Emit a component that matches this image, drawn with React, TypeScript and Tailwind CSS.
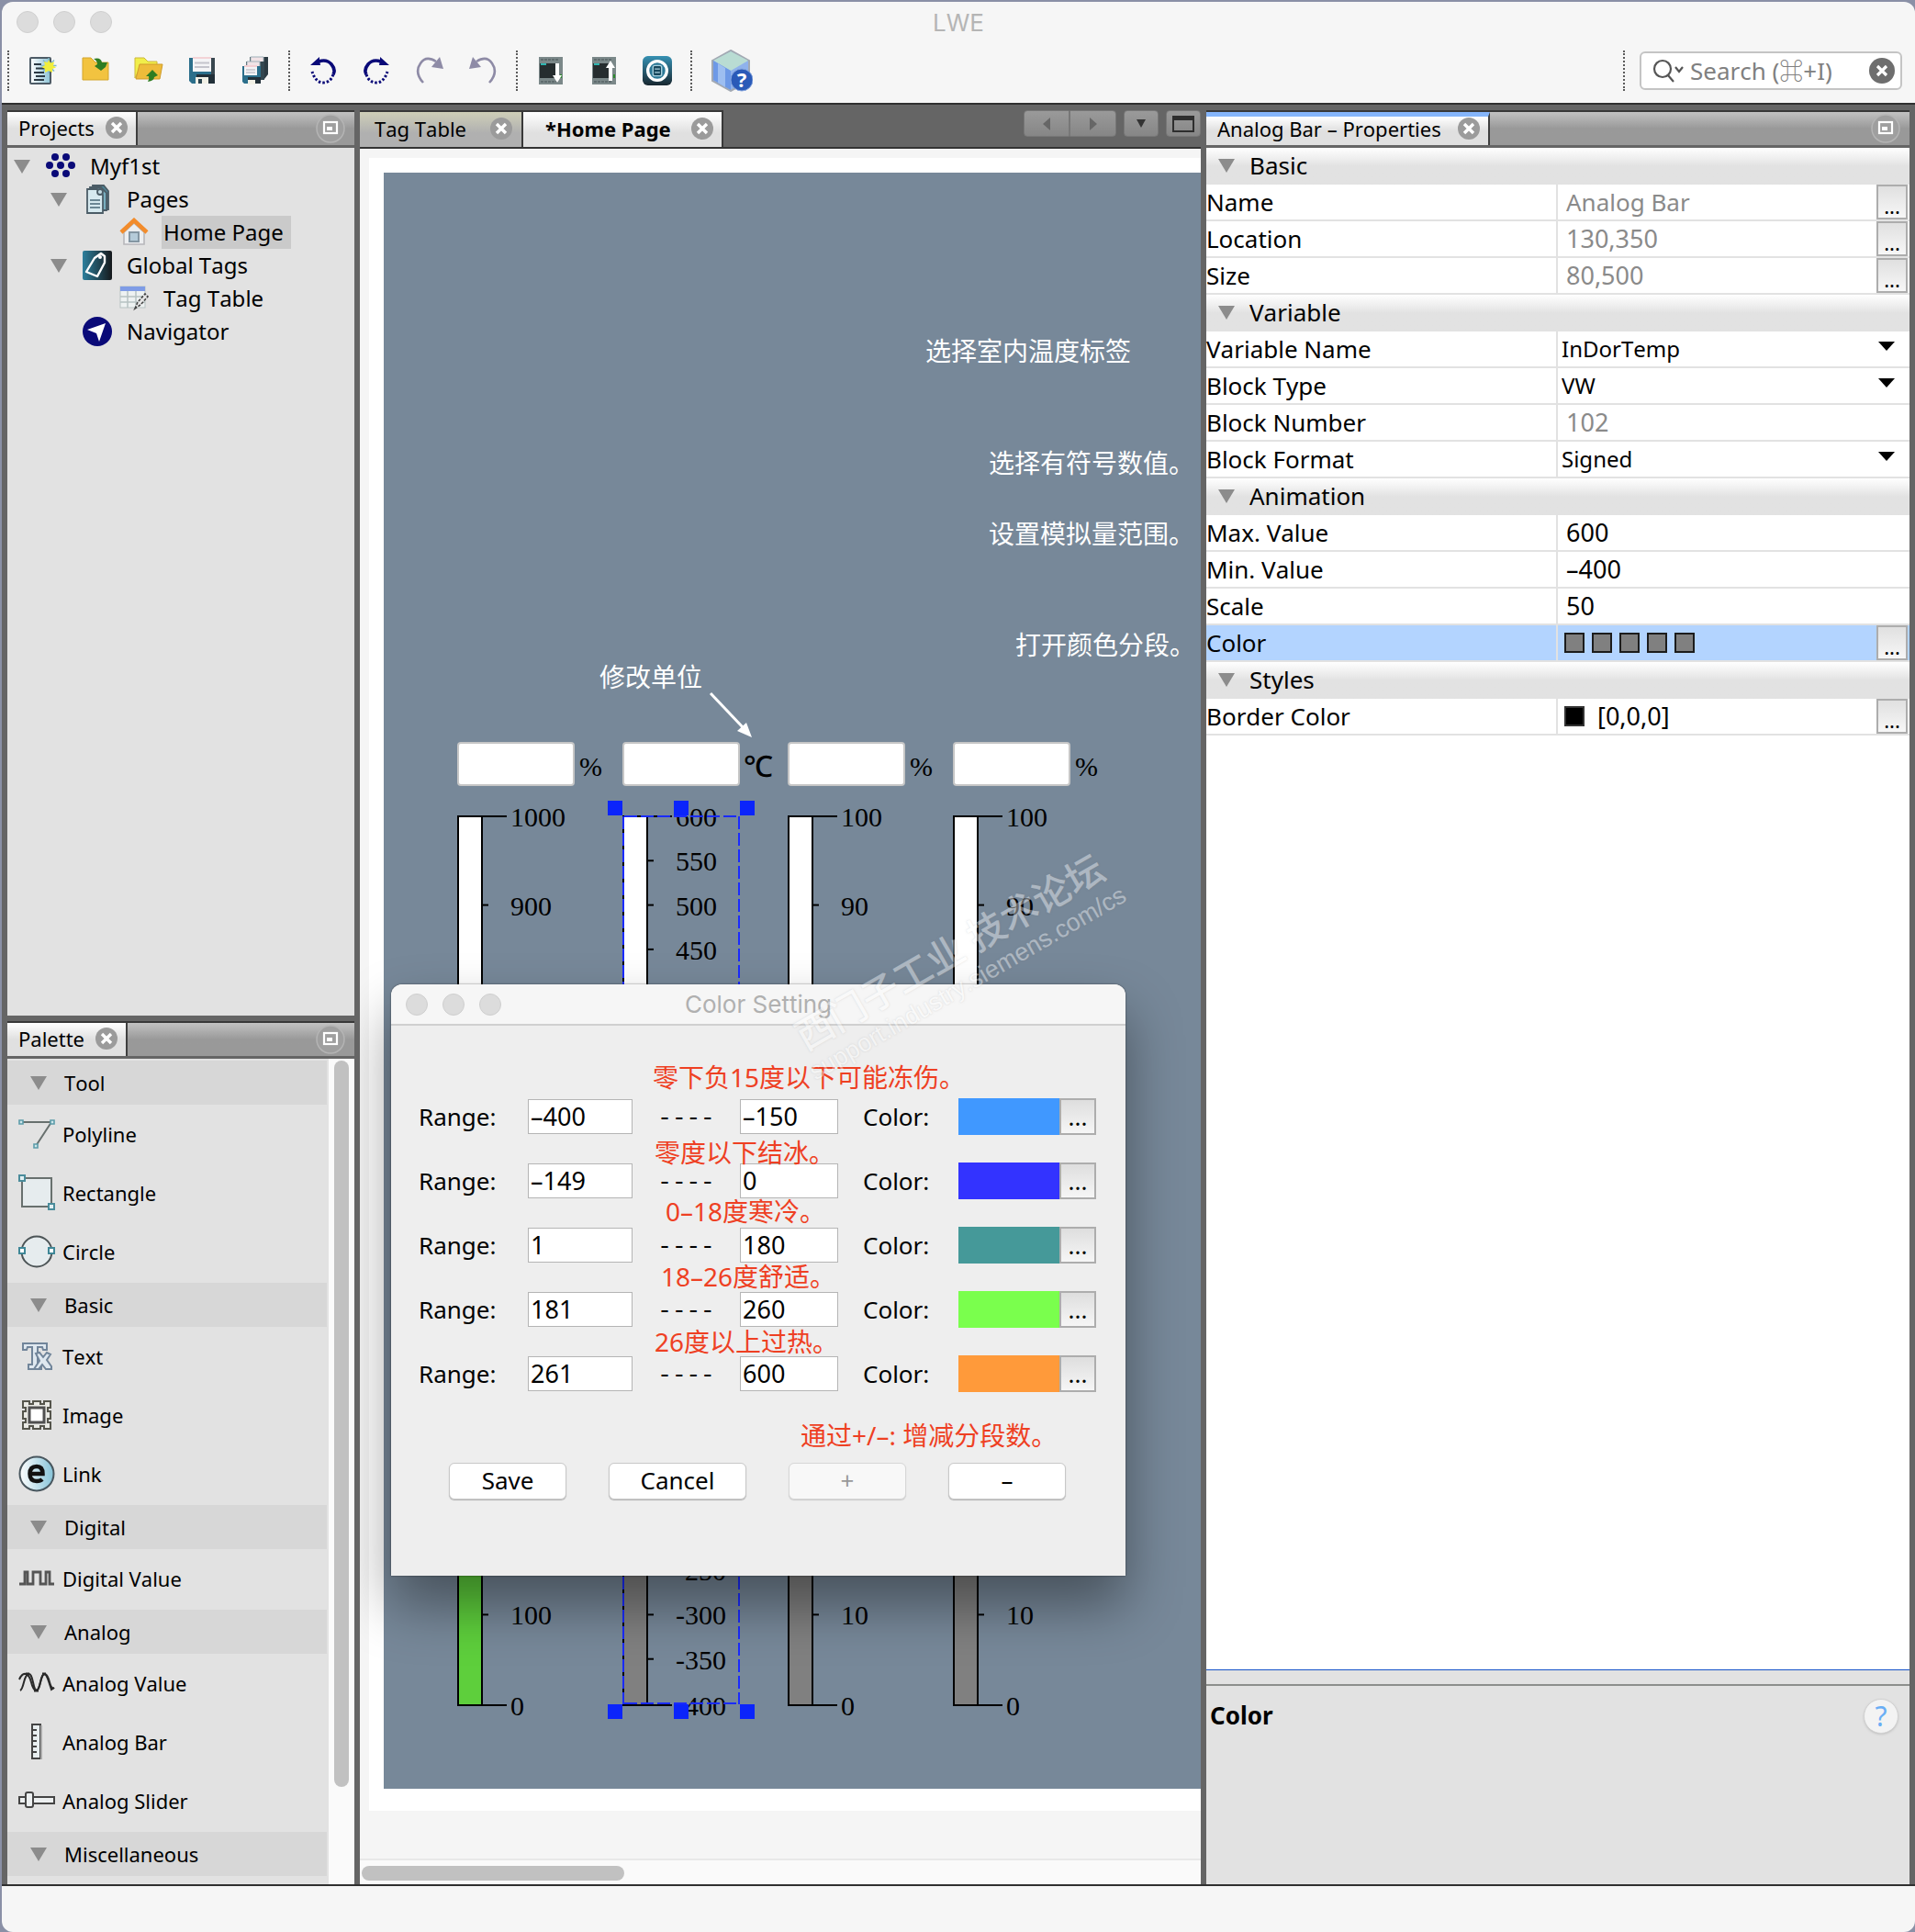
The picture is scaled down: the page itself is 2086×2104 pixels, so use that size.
import type { ReactNode } from "react";
import { useState } from "react";

const CANVAS_NOTES = [
  { text: "选择室内温度标签", pos: "left-[590px] top-[174px]" },
  { text: "选择有符号数值。", pos: "left-[659px] top-[296px]" },
  { text: "设置模拟量范围。", pos: "left-[659px] top-[373px]" },
  { text: "打开颜色分段。", pos: "left-[688px] top-[494px]" },
  { text: "修改单位", pos: "left-[235px] top-[529px]" },
];

const DIALOG_NOTES = [
  { text: "零下负15度以下可能冻伤。", pos: "left-[285px] top-[81px]" },
  { text: "零度以下结冰。", pos: "left-[287px] top-[163px]" },
  { text: "0–18度寒冷。", pos: "left-[299px] top-[227px]" },
  { text: "18–26度舒适。", pos: "left-[294px] top-[298px]" },
  { text: "26度以上过热。", pos: "left-[287px] top-[369px]" },
  { text: "通过+/–: 增减分段数。", pos: "left-[446px] top-[471px]" },
];

interface Range {
  from: string;
  to: string;
  swatch: string;
}

const RANGES: Range[] = [
  { from: "–400", to: "–150", swatch: "bg-[#4098ff]" },
  { from: "–149", to: "0", swatch: "bg-[#3333ff]" },
  { from: "1", to: "180", swatch: "bg-[#459999]" },
  { from: "181", to: "260", swatch: "bg-[#7aff4d]" },
  { from: "261", to: "600", swatch: "bg-[#ff9a3a]" },
];

function Triangle({ className = "" }: { className?: string }) {
  return (
    <svg width="18" height="15" viewBox="0 0 18 15" className={`shrink-0 ${className}`}>
      <path d="M0 0h18L9 15z" fill="#8c8c8c" />
    </svg>
  );
}

function CloseButton({ label }: { label: string }) {
  return (
    <button aria-label={label} className="shrink-0">
      <svg width="24" height="24" viewBox="0 0 24 24">
        <circle cx="12" cy="12" r="12" fill="#9b9b9b" />
        <path d="M7 7l10 10M17 7L7 17" stroke="#fff" strokeWidth="3.4" />
      </svg>
    </button>
  );
}

function FloatButton() {
  return (
    <button aria-label="Minimize panel" className="shrink-0">
      <svg width="32" height="32" viewBox="0 0 32 32">
        <circle cx="16" cy="16" r="15" fill="#9f9f9f" stroke="#b4b4b4" strokeWidth="1.5" />
        <rect x="9" y="9" width="14" height="12" fill="none" stroke="#fff" strokeWidth="2.2" />
        <rect x="12" y="14" width="6" height="4" fill="#fff" />
      </svg>
    </button>
  );
}

interface PanelHeaderProps {
  title: string;
  focused?: boolean;
}

function PanelHeader({ title, focused }: PanelHeaderProps) {
  return (
    <div className="flex h-[41px] shrink-0 border-t-2 border-b-3 border-t-[#383838] border-b-[#656565] bg-linear-to-b from-[#c2c2c2] to-[#999] to-50% pr-[10px]">
      <div
        className={`flex items-center border-r-2 border-[#3f3f3f] bg-linear-to-b from-white to-[#e0e0e0] to-50% pr-[9px] pl-3 text-[22px] leading-none ${focused ? "gap-[18px] border-t-5 border-t-[#85b5fa] pb-[6px]" : "gap-3 pb-[2px]"}`}
      >
        <span className="whitespace-nowrap">{title}</span>
        <CloseButton label={`Close ${title}`} />
      </div>
      <div className="flex flex-1 items-center justify-end">
        <FloatButton />
      </div>
    </div>
  );
}

/* toolbar icons */

function NewProjectIcon() {
  return (
    <svg width="32" height="32" viewBox="0 0 32 32">
      <defs>
        <linearGradient id="paper" x1="0" x2="1">
          <stop offset="0" stopColor="#fff" />
          <stop offset="1" stopColor="#8cc3d6" />
        </linearGradient>
      </defs>
      <rect x="3" y="2" width="22" height="28" rx="1" fill="url(#paper)" stroke="#4d5b66" strokeWidth="2" />
      <path d="M7 9h8M9 13.500h12M7 18h11M9 22h10M7 26h11" stroke="#2c3a44" strokeWidth="2" />
      <path d="M23 2v17M14.500 10.500h17M17 4.500l12 12M29 4.500l-12 12" stroke="#7fb8c9" strokeWidth="1.500" />
      <path d="M23 4l2 3.500 4-1-1 4 3 2-4 1.500v4l-4-2-4 2v-4l-3.500-2 3.500-2-1-4 4 1z" fill="#f0ee3c" />
    </svg>
  );
}

function ImportIcon() {
  return (
    <svg width="32" height="32" viewBox="0 0 32 32">
      <path d="M2 2h9l5 5h14v19H2z" fill="#f2c340" stroke="#d3a52b" />
      <path d="M14 3q8-2 9 4h6l-2 5-5 4-7-5 3-2q0-4-4-6z" fill="#2f7d22" />
    </svg>
  );
}

function OpenFolderIcon() {
  return (
    <svg width="32" height="32" viewBox="0 0 32 32">
      <path d="M1 2h10l4 4h10v6H7L1 24z" fill="#f1ee4a" stroke="#cdb73a" />
      <path d="M6 9h25l-3 16H2z" fill="#eebc3a" stroke="#cf9b2a" />
      <path d="M20 15l6 6-4 2q0 4-7 5 2-3 1-6h-3z" fill="#2f7d22" />
    </svg>
  );
}

function SaveIcon() {
  return (
    <svg width="32" height="32" viewBox="0 0 32 32">
      <path d="M2 2h28v28H5l-3-3z" fill="#2c6f8b" />
      <path d="M26 2h4v28h-4z" fill="#39474f" />
      <path d="M10 20h20v10H10z" fill="#223039" />
      <rect x="6" y="1" width="20" height="16" fill="#f4f4f6" />
      <path d="M6 2h20" stroke="#f3d3d6" strokeWidth="2" />
      <path d="M8 7.500h16M8 12h16" stroke="#c4c4cc" strokeWidth="2" />
      <rect x="9" y="23" width="14" height="7" fill="#f1f0e6" />
      <rect x="12" y="25" width="4" height="5" fill="#2a4450" />
    </svg>
  );
}

function SaveAllIcon() {
  return (
    <svg width="32" height="32" viewBox="0 0 32 32">
      <path d="M10 1h20v19l-4 5H10z" fill="#2b3a42" />
      <path d="M11 1h14v12H11z" fill="#f1e3e6" stroke="#9fb0b8" />
      <path d="M6 6h20v20H6z" fill="#33464f" />
      <path d="M7 6h14v12H7z" fill="#f1e3e6" stroke="#9fb0b8" />
      <path d="M2 11h20v19H4l-2-2z" fill="#2c6f8b" />
      <path d="M8 23h14v7H8z" fill="#223039" />
      <path d="M4 10h14v11H4z" fill="#f4f4f6" />
      <path d="M4 11h14" stroke="#f3cfd3" strokeWidth="2" />
      <path d="M6 15h10M6 18h10" stroke="#c4c4cc" strokeWidth="1.500" />
      <path d="M8 26h8v5H8z" fill="#f1f0e6" />
    </svg>
  );
}

function UndoIcon({ flip }: { flip?: boolean }) {
  return (
    <svg width="32" height="32" viewBox="0 0 32 32">
      <g transform={flip ? "matrix(-1 0 0 1 32 0)" : undefined} fill="none" stroke="#0a0a78">
        <path d="M11 6q9-3 14 3 5 6 2 11" strokeWidth="3.600" />
        <path d="M27 20q-3 9-11 9T4 17" strokeWidth="3" strokeDasharray="2.500 2" />
        <path d="M2 10l10-9v4l1 5z" fill="#0a0a78" stroke="none" />
      </g>
    </svg>
  );
}

function StepIcon({ flip }: { flip?: boolean }) {
  return (
    <svg width="32" height="32" viewBox="0 0 32 32">
      <g transform={flip ? "matrix(-1 0 0 1 32 0)" : undefined} fill="none" stroke="#8e8ba6">
        <path d="M9 29Q-1 18 6 8q6-9 17-2" strokeWidth="2.600" />
        <path d="M27 1l4 13-13-2z" fill="#8e8ba6" stroke="none" />
      </g>
    </svg>
  );
}

function DeviceIcon({ up }: { up?: boolean }) {
  return (
    <svg width="32" height="32" viewBox="0 0 32 32">
      <rect x="3" y="1" width="26" height="30" fill="#7b8889" />
      <path d="M5 4h20M5 28h20" stroke="#5f6c6e" strokeWidth="2" strokeDasharray="3 1" />
      <rect x="4" y="8" width="17" height="16" fill="#262d2f" />
      <path d="M5 9h6" stroke="#2fb5b0" strokeWidth="2" />
      <path d="M27 20v4" stroke="#2c8a2c" strokeWidth="2" />
      <path d={up ? "M23 5l5 8h-3v14h-4V13h-3z" : "M21 8h4v13h3l-5 8-5-8h3z"} fill="#fff" />
    </svg>
  );
}

function SimulatorIcon() {
  return (
    <svg width="34" height="34" viewBox="0 0 34 34">
      <defs>
        <linearGradient id="sim" x1="0" x2="0" y1="0" y2="1">
          <stop offset="0" stopColor="#3691b3" />
          <stop offset="1" stopColor="#182730" />
        </linearGradient>
      </defs>
      <rect width="34" height="34" rx="6" fill="url(#sim)" />
      <circle cx="17" cy="17" r="11" fill="#2b7896" stroke="#fff" strokeWidth="3.500" />
      <rect x="12" y="11" width="10" height="12" rx="2" fill="#17475c" stroke="#a9d0dd" strokeWidth="1.500" />
      <path d="M14 15h6M14 19h6" stroke="#a9d0dd" strokeWidth="1.500" />
    </svg>
  );
}

function HelpCubeIcon() {
  return (
    <svg width="46" height="46" viewBox="0 0 46 46">
      <path d="M22 1l20 11v22L22 45 2 34V12z" fill="#8fb2ec" stroke="#a2a9b3" strokeWidth="2" />
      <path d="M22 2l19 10-19 11L3 12z" fill="#b9dcd3" />
      <path d="M3 12l19 11v21L3 33z" fill="#6d99e6" />
      <path d="M8 15l8 5v21l-8-5z" fill="#9dbef0" />
      <circle cx="34" cy="33" r="12" fill="#2a5ab8" stroke="#86a5dc" />
      <text x="34" y="41" textAnchor="middle" fontSize="22" fontWeight="700" fill="#fff">
        ?
      </text>
    </svg>
  );
}

function ToolSeparator() {
  return <div className="h-[44px] border-l-2 border-dotted border-[#5a5a5a]" />;
}

function ToolGroup({ items }: { items: [string, ReactNode][] }) {
  return (
    <div className="flex items-center gap-[26px]">
      {items.map(([label, icon]) => (
        <button key={label} aria-label={label} className="flex size-8 items-center justify-center">
          {icon}
        </button>
      ))}
    </div>
  );
}

function Toolbar() {
  return (
    <div className="flex h-[66px] items-center gap-5 pr-[14px] pb-1 pl-[6px]">
      <ToolSeparator />
      <ToolGroup
        items={[
          ["New", <NewProjectIcon />],
          ["Import", <ImportIcon />],
          ["Open", <OpenFolderIcon />],
          ["Save", <SaveIcon />],
          ["Save all", <SaveAllIcon />],
        ]}
      />
      <ToolSeparator />
      <ToolGroup
        items={[
          ["Undo", <UndoIcon />],
          ["Redo", <UndoIcon flip />],
          ["Forward", <StepIcon />],
          ["Back", <StepIcon flip />],
        ]}
      />
      <ToolSeparator />
      <ToolGroup
        items={[
          ["Download", <DeviceIcon />],
          ["Upload", <DeviceIcon up />],
          ["Simulate", <SimulatorIcon />],
        ]}
      />
      <ToolSeparator />
      <button aria-label="Help">
        <HelpCubeIcon />
      </button>
      <div className="ml-auto flex items-center gap-4">
        <ToolSeparator />
        <div className="flex h-[42px] w-[286px] items-center rounded-md border-2 border-[#c4c4c4] bg-white pr-[6px] pl-3">
          <svg width="34" height="28" viewBox="0 0 34 28" fill="none" stroke="#555" strokeWidth="2.200">
            <circle cx="11" cy="12" r="9" />
            <path d="M17 19l6 7M25 10l4 5 4-5" />
          </svg>
          <input
            aria-label="Search"
            placeholder="Search (⌘+I)"
            className="min-w-0 flex-1 pl-[7px] text-[26px] leading-8 outline-none placeholder:text-[#808080]"
          />
          <button aria-label="Clear search">
            <svg width="28" height="28" viewBox="0 0 28 28">
              <circle cx="14" cy="14" r="14" fill="#6e6e6e" />
              <path d="M9 9l10 10M19 9L9 19" stroke="#fff" strokeWidth="3.200" />
            </svg>
          </button>
        </div>
      </div>
    </div>
  );
}

function TrafficLights() {
  return (
    <div className="flex gap-4">
      <i className="size-6 rounded-full border border-[#cfcfcf] bg-[#dcdcdc]" />
      <i className="size-6 rounded-full border border-[#cfcfcf] bg-[#dcdcdc]" />
      <i className="size-6 rounded-full border border-[#cfcfcf] bg-[#dcdcdc]" />
    </div>
  );
}

/* project tree */

const treeIcons = {
  project: (
    <svg width="32" height="32" viewBox="0 0 32 32" fill="#0a0a78">
      <circle cx="10" cy="6" r="4" />
      <circle cx="22" cy="6" r="4" />
      <circle cx="4" cy="15" r="4" />
      <circle cx="16" cy="15" r="4" />
      <circle cx="28" cy="15" r="4" />
      <circle cx="10" cy="24" r="4" />
      <circle cx="22" cy="24" r="4" />
    </svg>
  ),
  pages: (
    <svg width="32" height="32" viewBox="0 0 32 32" stroke="#4b5c66" strokeWidth="1.800">
      <path d="M11 1h12l5 6v20H11z" fill="#4f8496" />
      <path d="M8 3h12l6 6v19H8z" fill="#78afc0" />
      <path d="M5 5h11l6 6v20H5z" fill="#d6e9ef" />
      <path d="M8 17h11M8 21h11M8 25h11" stroke="#6b8794" />
      <circle cx="19" cy="8" r="3" fill="#c3dbe3" />
    </svg>
  ),
  home: (
    <svg width="32" height="32" viewBox="0 0 32 32" fill="none">
      <path d="M5 16v13h22V16L16 6z" fill="#eceef0" stroke="#b7b7bb" strokeWidth="1.600" />
      <rect x="11" y="16" width="10" height="10" fill="#b5cbd9" stroke="#8496a3" strokeWidth="2" />
      <path d="M2 16L16 3l14 13" stroke="#f28c2c" strokeWidth="4.500" />
    </svg>
  ),
  tags: (
    <svg width="32" height="32" viewBox="0 0 32 32">
      <defs>
        <linearGradient id="tags" x1="0" x2="1">
          <stop offset="0" stopColor="#2d7f9c" />
          <stop offset="1" stopColor="#16191c" />
        </linearGradient>
      </defs>
      <rect width="32" height="32" rx="2" fill="url(#tags)" />
      <path
        d="M13 8l7-5 4 3v7l-8 15-12-5z"
        fill="none"
        stroke="#fff"
        strokeWidth="2.400"
        strokeLinejoin="round"
      />
      <circle cx="19" cy="7" r="2" fill="#fff" />
    </svg>
  ),
  table: (
    <svg width="32" height="32" viewBox="0 0 32 32" fill="none">
      <rect x="1" y="3" width="27" height="23" fill="#eef2f2" stroke="#b7c2c2" />
      <path d="M1 14h27M1 20h27M9 8v18M18 8v18" stroke="#b7c2c2" strokeWidth="1.500" />
      <path d="M1 5.500h27" stroke="#7f9ce6" strokeWidth="5" />
      <path d="M17 27l3-7 8-9 3 3-8 9z" fill="#e6e6e6" stroke="#444" strokeWidth="1.600" strokeDasharray="3 1.500" />
    </svg>
  ),
  navigator: (
    <svg width="32" height="32" viewBox="0 0 32 32">
      <circle cx="16" cy="16" r="16" fill="#0a0a78" />
      <path d="M5 14l20-7-7 20-3-9z" fill="#fff" />
    </svg>
  ),
};

interface TreeNode {
  label: string;
  icon: keyof typeof treeIcons;
  indent: string;
  expandable?: boolean;
  selected?: boolean;
}

const TREE: TreeNode[] = [
  { label: "Myf1st", icon: "project", indent: "pl-[7px]", expandable: true },
  { label: "Pages", icon: "pages", indent: "pl-[47px]", expandable: true },
  { label: "Home Page", icon: "home", indent: "pl-[122px]", selected: true },
  { label: "Global Tags", icon: "tags", indent: "pl-[47px]", expandable: true },
  { label: "Tag Table", icon: "table", indent: "pl-[122px]" },
  { label: "Navigator", icon: "navigator", indent: "pl-[82px]" },
];

function ProjectTree() {
  return (
    <ul className="flex-1 bg-[#e2e2e2] pt-[2px] text-[24px]">
      {TREE.map((node) => (
        <li key={node.label} className={`flex h-9 items-center ${node.indent}`}>
          {node.expandable && <Triangle className="mr-[17px]" />}
          {treeIcons[node.icon]}
          <span className={`ml-[14px] px-[2px] leading-9 ${node.selected ? "bg-[#cacaca] pr-2" : ""}`}>
            {node.label}
          </span>
        </li>
      ))}
    </ul>
  );
}

/* palette */

const paletteIcons: Record<string, ReactNode> = {
  Polyline: (
    <g fill="none">
      <path d="M4 7h32L19 33" stroke="#68706e" strokeWidth="2" />
      <path d="M1 5h4v4H1zM35 5h4v4h-4zM17 31h4v4h-4z" fill="#cfe6ea" stroke="#5d9dab" strokeWidth="1.600" />
    </g>
  ),
  Rectangle: (
    <g>
      <rect x="4" y="4" width="32" height="31" fill="#e6ecee" stroke="#68706e" strokeWidth="2" />
      <path d="M1 1h6v6H1zM33 32h6v6h-6z" fill="#e2f0f3" stroke="#4a8c9b" strokeWidth="2" />
    </g>
  ),
  Circle: (
    <g>
      <circle cx="20" cy="20" r="16.500" fill="#e6ecee" stroke="#4c5456" strokeWidth="2" />
      <path d="M1 16h6v6H1zM33 16h6v6h-6z" fill="#fff" stroke="#3f8797" strokeWidth="2" />
    </g>
  ),
  Text: (
    <g fill="#dfe8f0" stroke="#71859a" strokeWidth="2">
      <path d="M5 6h26v7h-4l-1-3h-5v19h4v5H11v-5h4V10h-5l-1 3H5z" />
      <path d="M19 17l4-1 4 5 4-5 4 2-4 6 5 7v3h-6l-4-5-4 5h-5l6-9z" />
    </g>
  ),
  Image: (
    <g fill="none">
      <path
        d="M5 5h7v3h4V5h8v3h4V5h7v7h-3v4h3v8h-3v4h3v7h-7v-3h-4v3h-8v-3h-4v3H5v-7h3v-4H5v-8h3v-4H5z"
        fill="#e9e9e4"
        stroke="#55554c"
        strokeWidth="2"
      />
      <rect x="12" y="12" width="16" height="16" fill="#fff" stroke="#505050" strokeWidth="3" />
    </g>
  ),
  Link: (
    <g>
      <defs>
        <linearGradient id="link" x1="0" x2="1">
          <stop offset="0" stopColor="#fff" />
          <stop offset="1" stopColor="#86c3d8" />
        </linearGradient>
      </defs>
      <circle cx="20" cy="20" r="18.500" fill="url(#link)" stroke="#48565e" strokeWidth="2" />
      <path d="M13 20h13.500q0-8-6.500-8-7.500 0-7.500 8t7.500 8q4 0 6-2" fill="none" stroke="#111" strokeWidth="4.500" />
    </g>
  ),
  "Digital Value": (
    <path d="M1 26h6V13h3v13h6V13h8v13h6V13h4v13h5" fill="none" stroke="#555" strokeWidth="2.800" />
  ),
  "Analog Value": (
    <g fill="none" stroke="#2a2a2a" strokeWidth="2">
      <path d="M1 16q3-7 7-6 4 1 6 9t5 9 5-9 5-9 5 9 5 6" />
      <path d="M2 28q2-1 4-9t5-9 5 9 4 9 4-9 4-9 5 8 3 9 3-2" />
      <path d="M8 10h4M26 10h4M17 28h5" strokeWidth="3" />
    </g>
  ),
  "Analog Bar": (
    <g>
      <rect x="15" y="1" width="9" height="37" fill="#e8eef0" stroke="#444" strokeWidth="2" />
      <path d="M25 2v37" stroke="#aaa" strokeWidth="2" />
      <path d="M15 7h5M15 13h5M15 19h5M15 25h5M15 31h5" stroke="#444" strokeWidth="2" />
    </g>
  ),
  "Analog Slider": (
    <g fill="#eceff0" stroke="#444" strokeWidth="2">
      <rect x="1" y="16" width="38" height="7" />
      <rect x="8" y="11" width="8" height="16" rx="2" />
    </g>
  ),
};

const PALETTE: { title: string; items: string[] }[] = [
  { title: "Tool", items: ["Polyline", "Rectangle", "Circle"] },
  { title: "Basic", items: ["Text", "Image", "Link"] },
  { title: "Digital", items: ["Digital Value"] },
  { title: "Analog", items: ["Analog Value", "Analog Bar", "Analog Slider"] },
  { title: "Miscellaneous", items: [] },
];

function Palette() {
  return (
    <div className="flex bg-[#e2e2e2] text-[22px] leading-none">
      <div className="flex-1 pt-[2px] pb-[9px]">
        {PALETTE.map((group) => (
          <section key={group.title}>
            <h3 className="flex h-12 items-center gap-[19px] bg-[#d7d7d7] pl-[25px]">
              <Triangle />
              {group.title}
            </h3>
            {group.items.length > 0 && (
              <ul className="pb-[2px]">
                {group.items.map((item) => (
                  <li key={item} className="flex h-16 items-center gap-2 pl-3">
                    <svg width="40" height="40" viewBox="0 0 40 40">
                      {paletteIcons[item]}
                    </svg>
                    {item}
                  </li>
                ))}
              </ul>
            )}
          </section>
        ))}
      </div>
      <div className="ml-[2px] w-7 bg-[#fafafa] px-[6px] pt-[2px]">
        <div className="h-[791px] rounded-full bg-[#c1c1c1]" />
      </div>
    </div>
  );
}

/* editor canvas */

interface BarProps {
  max: number;
  min: number;
  step: number;
  fill: string;
  pos: string;
}

const BAR_HEIGHT = 969;
const SCALE_HEIGHT = 966;

// ticks in this span sit under the open dialog
const COVERED = [190, 810];

function AnalogBar({ max, min, step, fill, pos }: BarProps) {
  const count = (max - min) / step;
  const ticks = Array.from({ length: count + 1 }, (_, i) => ({
    value: max - i * step,
    y: i === count ? BAR_HEIGHT : 1 + (i * SCALE_HEIGHT) / count,
    edge: i === 0 || i === count,
  })).filter(({ y }) => y < COVERED[0] || y > COVERED[1]);
  return (
    <svg width="130" height="971" className={`absolute top-[700px] overflow-visible ${pos}`}>
      <rect x="1" y="1" width="26" height="484" fill="#fff" />
      <rect x="1" y="485" width="26" height="485" fill={fill} />
      <path d="M1 0V970M27 0V970" stroke="#000" strokeWidth="2" />
      <path d="M0 1H54M0 969H54" stroke="#000" strokeWidth="2" />
      {ticks.map(({ value, y, edge }) => (
        <g key={value}>
          {!edge && <path d={`M27 ${y}h7`} stroke="#000" strokeWidth="2" />}
          <text x={58} y={y + 11} fontSize="30" className="font-['Liberation_Serif',serif]">
            {value}
          </text>
        </g>
      ))}
    </svg>
  );
}

const READOUTS = [
  { id: "r1", unit: "%", pos: "left-[80px]" },
  { id: "r2", unit: "℃", pos: "left-[260px]" },
  { id: "r3", unit: "%", pos: "left-[440px]" },
  { id: "r4", unit: "%", pos: "left-[620px]" },
];

function Selection() {
  return (
    <svg width="160" height="1000" className="absolute top-[684px] left-[244px] overflow-visible">
      <path d="M18 17h124M18 983h124" stroke="#1a2bff" strokeWidth="2" strokeDasharray="14 4" />
      <path d="M17 17v967M143 17v967" stroke="#1a2bff" strokeWidth="2" strokeDasharray="14 4" />
      <path
        d="M0 0h16v16H0zM72 0h16v16H72zM144 0h16v16h-16zM0 984h16v16H0zM72 984h16v16H72zM144 984h16v16h-16z"
        fill="#0b24fb"
      />
    </svg>
  );
}

function PageCanvas() {
  return (
    <div className="relative h-[1760px] overflow-hidden bg-[#778899]">
      {CANVAS_NOTES.map((note) => (
        <p
          key={note.text}
          className={`absolute text-[28px] leading-10 whitespace-nowrap text-white ${note.pos}`}
        >
          {note.text}
        </p>
      ))}
      <svg width="50" height="54" viewBox="0 0 50 54" className="absolute top-[565px] left-[354px]">
        <path d="M2 2l36 38" stroke="#fff" strokeWidth="3" />
        <path d="M47 50l-16-7 10-9z" fill="#fff" />
      </svg>
      {READOUTS.map(({ id, unit, pos }) => (
        <div key={id} className={`absolute top-[620px] flex items-center ${pos}`}>
          <input
            aria-label={`Readout ${unit}`}
            className="h-12 w-32 rounded-sm border-2 border-[#c6c6c6] bg-white outline-none"
          />
          {unit === "%" ? (
            <span className="ml-[5px] pt-[6px] font-['Liberation_Serif',serif] text-[30px] leading-none">%</span>
          ) : (
            <span className="ml-1 pt-1 text-[32px] leading-none font-medium">{unit}</span>
          )}
        </div>
      ))}
      <AnalogBar max={1000} min={0} step={100} fill="#5ecf3c" pos="left-[80px]" />
      <AnalogBar max={600} min={-400} step={50} fill="#808080" pos="left-[260px]" />
      <AnalogBar max={100} min={0} step={10} fill="#808080" pos="left-[440px]" />
      <AnalogBar max={100} min={0} step={10} fill="#808080" pos="left-[620px]" />
      <Selection />
    </div>
  );
}

function ColorDialog() {
  const [ranges, setRanges] = useState(RANGES);

  function update(index: number, patch: Partial<Range>) {
    setRanges(ranges.map((r, i) => (i === index ? { ...r, ...patch } : r)));
  }

  const inputClass = "h-[38px] border border-[#b5b5b5] bg-white px-[2px] text-[27px] outline-none";
  const buttonClass =
    "h-10 rounded-md border border-[#c8c8c8] bg-white pb-[2px] leading-none shadow-[0_1px_1px_rgba(0,0,0,0.25)]";

  return (
    <div
      role="dialog"
      aria-label="Color Setting"
      className="absolute top-[910px] left-[34px] h-[644px] w-[800px] rounded-t-xl bg-[#eee] text-[26px] shadow-[0_0_2px_rgba(0,0,0,0.6),0_32px_60px_rgba(0,0,0,0.4)]"
    >
      <div className="relative flex h-[45px] items-center justify-center rounded-t-xl border-b-2 border-[#d0d0d0] bg-[#f6f6f6]">
        <div className="absolute left-4">
          <TrafficLights />
        </div>
        <h2 className="font-['Inter',sans-serif] text-[26px] text-[#b0b0b0]">Color Setting</h2>
      </div>
      <div className="grid gap-[30px] px-[30px] pt-[79px]">
        {ranges.map((range, i) => (
          <div key={i} className="flex h-10 items-center">
            <label htmlFor={`from-${i}`} className="w-[119px]">
              Range:
            </label>
            <input
              id={`from-${i}`}
              value={range.from}
              onChange={(e) => update(i, { from: e.target.value })}
              className={`w-[114px] ${inputClass}`}
            />
            <label
              htmlFor={`to-${i}`}
              className="w-[117px] pt-1 text-center font-['Liberation_Mono',monospace] leading-none"
            >
              ----
            </label>
            <input
              id={`to-${i}`}
              value={range.to}
              onChange={(e) => update(i, { to: e.target.value })}
              className={`w-[107px] ${inputClass}`}
            />
            <span className="w-[131px] pl-[27px]">Color:</span>
            <span className={`h-10 w-[110px] ${range.swatch}`} />
            <button
              aria-label="Choose color"
              className="h-10 w-10 border-2 border-[#adadad] bg-linear-to-b from-[#dedede] to-[#f6f6f6] leading-none"
            >
              ...
            </button>
          </div>
        ))}
      </div>
      <div className="flex px-[63px] pt-[77px]">
        <button className={`mr-[46px] w-32 ${buttonClass}`}>Save</button>
        <button className={`mr-[46px] w-[150px] ${buttonClass}`}>Cancel</button>
        <button disabled className={`mr-[46px] w-32 text-[#606060] opacity-60 ${buttonClass}`}>
          +
        </button>
        <button className={`w-32 ${buttonClass}`}>–</button>
      </div>
      {DIALOG_NOTES.map((note) => (
        <p
          key={note.text}
          className={`pointer-events-none absolute text-[28px] leading-10 whitespace-nowrap text-[#ee4023] ${note.pos}`}
        >
          {note.text}
        </p>
      ))}
    </div>
  );
}

function Watermark() {
  return (
    <div className="pointer-events-none absolute top-[848px] left-[440px] w-[420px] -rotate-30 text-center whitespace-nowrap text-white opacity-40 [text-shadow:0_0_2px_rgba(110,110,110,0.6)]">
      <p className="text-[41px] leading-[48px] font-medium">西门子工业 技术论坛</p>
      <p className="font-['Liberation_Sans',sans-serif] text-[27px] leading-8">support.industry.siemens.com/cs</p>
    </div>
  );
}

function EditorTabs() {
  const navButton =
    "flex h-[29px] items-center justify-center border border-[#777] bg-linear-to-b from-[#9a9a9a] to-[#868686]";
  return (
    <div className="flex h-[42px] shrink-0 border-b-2 border-[#333] bg-[#656565]">
      <div className="flex items-center gap-[26px] border-t-2 border-r-2 border-[#383838] bg-linear-to-b from-[#cfcfb8] to-[#b0b0b0] to-60% pr-[10px] pb-[3px] pl-4 text-[22px] leading-none">
        Tag Table
        <CloseButton label="Close Tag Table" />
      </div>
      <div className="flex items-center gap-[22px] border-t-2 border-r-2 border-[#383838] bg-linear-to-b from-white to-[#e0e0e0] to-60% pr-[9px] pb-[3px] pl-6 text-[22px] leading-none font-bold">
        *Home Page
        <CloseButton label="Close Home Page" />
      </div>
      <div className="ml-auto flex">
        <button aria-label="Previous tab" className={`w-[50px] rounded-l-sm ${navButton}`}>
          <svg width="8" height="14" viewBox="0 0 8 14">
            <path d="M8 0v14L0 7z" fill="#666" />
          </svg>
        </button>
        <button aria-label="Next tab" className={`mr-2 w-[51px] rounded-r-sm ${navButton}`}>
          <svg width="8" height="14" viewBox="0 0 8 14">
            <path d="M0 0v14l8-7z" fill="#666" />
          </svg>
        </button>
        <button aria-label="Tab list" className={`mr-2 w-[38px] rounded-sm ${navButton}`}>
          <svg width="10" height="9" viewBox="0 0 10 9">
            <path d="M0 0h10L5 9z" fill="#333" />
          </svg>
        </button>
        <button aria-label="Maximize" className={`w-[38px] rounded-sm ${navButton}`}>
          <svg width="24" height="18" viewBox="0 0 24 18">
            <path d="M1 1h22v16H1z" fill="none" stroke="#2e2e2e" strokeWidth="2" />
            <path d="M0 3h24" stroke="#2e2e2e" strokeWidth="4" />
          </svg>
        </button>
      </div>
    </div>
  );
}

function Editor() {
  return (
    <main className="flex min-w-0 flex-1 flex-col overflow-hidden">
      <EditorTabs />
      <div className="relative flex-1 bg-[#f5f5f5] pt-[10px] pb-[52px] pl-[10px]">
        <div className="bg-white pt-4 pb-6 pl-4">
          <PageCanvas />
        </div>
        <ColorDialog />
        <Watermark />
      </div>
      <div className="h-7 border-t-2 border-[#e8e8e8] bg-[#fafafa] px-[2px] pt-[6px]">
        <div className="h-4 w-[286px] rounded-full bg-[#c1c1c1]" />
      </div>
    </main>
  );
}

/* properties */

type PropKind = "text" | "readonly" | "select" | "swatches" | "color";

interface Prop {
  name: string;
  value: string;
  kind: PropKind;
  more?: boolean;
}

const PROPERTIES: { title: string; props: Prop[] }[] = [
  {
    title: "Basic",
    props: [
      { name: "Name", value: "Analog Bar", kind: "readonly", more: true },
      { name: "Location", value: "130,350", kind: "readonly", more: true },
      { name: "Size", value: "80,500", kind: "readonly", more: true },
    ],
  },
  {
    title: "Variable",
    props: [
      { name: "Variable Name", value: "InDorTemp", kind: "select" },
      { name: "Block Type", value: "VW", kind: "select" },
      { name: "Block Number", value: "102", kind: "readonly" },
      { name: "Block Format", value: "Signed", kind: "select" },
    ],
  },
  {
    title: "Animation",
    props: [
      { name: "Max. Value", value: "600", kind: "text" },
      { name: "Min. Value", value: "–400", kind: "text" },
      { name: "Scale", value: "50", kind: "text" },
      { name: "Color", value: "", kind: "swatches", more: true },
    ],
  },
  {
    title: "Styles",
    props: [{ name: "Border Color", value: "[0,0,0]", kind: "color", more: true }],
  },
];

function PropValue({ prop, id }: { prop: Prop; id: string }) {
  if (prop.kind === "select") {
    return (
      <div className="relative flex-1 pb-[2px] pl-1">
        <select id={id} className="h-9 w-full appearance-none bg-transparent text-[24px] leading-9 outline-none">
          <option>{prop.value}</option>
        </select>
        <svg width="18" height="10" viewBox="0 0 18 10" className="pointer-events-none absolute top-3 right-4">
          <path d="M0 0h18l-9 10z" fill="#000" />
        </svg>
      </div>
    );
  }
  if (prop.kind === "swatches") {
    return (
      <div id={id} className="flex flex-1 gap-2 pl-[7px]">
        {[0, 1, 2, 3, 4].map((i) => (
          <i key={i} className="size-[22px] border-2 border-[#1c1c1c] bg-[#808080]" />
        ))}
      </div>
    );
  }
  const numeric = /\d/.test(prop.value);
  return (
    <div className="flex min-w-0 flex-1 items-center pl-[7px]">
      {prop.kind === "color" && <i className="mr-3 size-[22px] border-2 border-[#333] bg-black" />}
      <input
        id={id}
        defaultValue={prop.value}
        readOnly={prop.kind === "readonly"}
        className={`min-w-0 flex-1 bg-transparent pl-[2px] leading-9 outline-none ${numeric ? "text-[27px]" : ""} ${prop.kind === "readonly" ? "text-[#8a8a8a]" : ""}`}
      />
    </div>
  );
}

function PropRow({ prop }: { prop: Prop }) {
  const id = prop.name.toLowerCase().replace(/\W+/g, "-");
  const bg = prop.kind === "swatches" ? "bg-[#b3d4ff]" : "bg-white";
  return (
    <div className={`flex h-10 items-center border-b-2 border-[#e2e2e2] ${bg}`}>
      <label htmlFor={id} className="h-full w-1/2 border-r-2 border-[#e2e2e2] leading-[38px]">
        {prop.name}
      </label>
      <PropValue prop={prop} id={id} />
      {prop.more && (
        <button
          aria-label={`Edit ${prop.name}`}
          className="mr-[2px] flex h-[38px] w-[34px] items-end justify-center border-2 border-[#adadad] bg-linear-to-b from-[#e0e0e0] to-[#f7f7f7] pb-[2px] text-[22px] leading-none"
        >
          ...
        </button>
      )}
    </div>
  );
}

function Properties() {
  return (
    <aside className="flex w-[766px] shrink-0 flex-col">
      <PanelHeader title="Analog Bar – Properties" focused />
      <div className="flex-1 bg-white text-[26px]">
        {PROPERTIES.map((group) => (
          <section key={group.title}>
            <h3 className="flex h-10 items-center gap-4 bg-linear-to-b from-white to-[#e2e2e2] to-50% pb-[2px] pl-[13px] leading-none">
              <Triangle />
              {group.title}
            </h3>
            {group.props.map((prop) => (
              <PropRow key={prop.name} prop={prop} />
            ))}
          </section>
        ))}
      </div>
      <div className="h-4 border-t border-[#1652c8] bg-[#e2e2e2]" />
      <div className="flex h-[218px] items-start justify-between border-t-2 border-[#8c8f8c] bg-[#e2e2e2] pt-[14px] pr-3 pl-1">
        <h3 className="text-[26px] leading-9 font-bold">Color</h3>
        <button
          aria-label="Property help"
          className="flex size-[38px] items-center justify-center rounded-full border border-[#d2d2d2] bg-[#f3f3f3] text-[30px] leading-none text-[#6aaef5] shadow-sm"
        >
          ?
        </button>
      </div>
    </aside>
  );
}

function App() {
  return (
    <div className="flex min-h-screen flex-col bg-[#8a90a6] pt-[2px] pl-[2px] font-['Noto_Sans','Noto_Sans_CJK_SC',sans-serif] text-black [font-kerning:none]">
      <div className="flex flex-1 flex-col overflow-hidden rounded-xl bg-[#f6f6f6]">
        <div className="relative flex h-[44px] items-center justify-center">
          <div className="absolute left-4">
            <TrafficLights />
          </div>
          <h1 className="font-['Inter',sans-serif] text-[26px] text-[#b5b5b5]">LWE</h1>
        </div>
        <Toolbar />
        <div className="flex flex-1 gap-[6px] border-y-2 border-[#303030] bg-[#656565] px-[6px] pt-[6px]">
          <div className="flex w-[378px] shrink-0 flex-col">
            <PanelHeader title="Projects" />
            <ProjectTree />
            <div className="mt-[6px]">
              <PanelHeader title="Palette" />
              <Palette />
            </div>
          </div>
          <Editor />
          <Properties />
        </div>
        <div className="h-[50px]" />
      </div>
    </div>
  );
}

export default App;
